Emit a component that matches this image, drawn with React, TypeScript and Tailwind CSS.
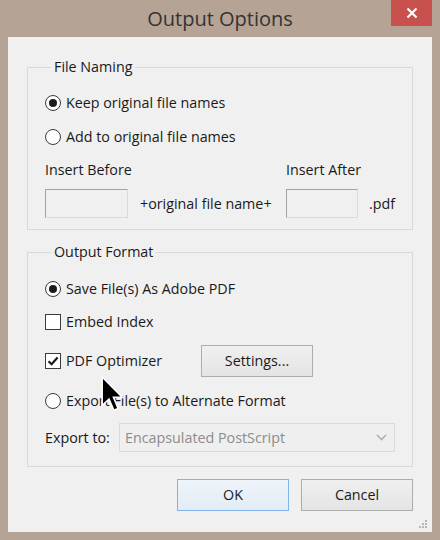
import React from "react";

const font = { fontFamily: '"Open Sans", "Noto Sans", Arial, sans-serif' };

function Radio({ checked, label }: { checked?: boolean; label: string }) {
  return (
    <div className="flex items-center h-[20px] gap-[5px]">
      <span className="w-[16px] h-[16px] rounded-full border border-[#3b3b3b] bg-white flex items-center justify-center">
        {checked && <span className="w-[8px] h-[8px] rounded-full bg-[#1c1c1c]" />}
      </span>
      <span className="text-[14.3px] text-[#1a1a1a] whitespace-nowrap">{label}</span>
    </div>
  );
}

function Checkbox({ checked, label }: { checked?: boolean; label: string }) {
  return (
    <div className="flex items-center h-[20px] gap-[5px]">
      <span className="w-[16px] h-[16px] border border-[#3b3b3b] bg-white flex items-center justify-center">
        {checked && (
          <svg width="12" height="12" viewBox="0 0 12 12">
            <path d="M1.5 6.2 L4.6 9.2 L10.6 2.4" fill="none" stroke="#1a1a1a" strokeWidth="2.2" />
          </svg>
        )}
      </span>
      <span className="text-[14.3px] text-[#1a1a1a] whitespace-nowrap">{label}</span>
    </div>
  );
}

function TextBox({ w }: { w: string }) {
  return (
    <div
      className={`${w} h-[29px] bg-[#f0f0f0] border border-t-[#a3a3a3] border-l-[#a3a3a3] border-r-[#dadada] border-b-[#dadada]`}
    />
  );
}

function Group({ title, children }: { title: string; children: React.ReactNode }) {
  return (
    <fieldset className="border border-[#d9d9d9] px-[17px]">
      <legend className="ml-[6px] px-[3px] text-[14.3px] leading-[20px] text-[#1a1a1a]">{title}</legend>
      {children}
    </fieldset>
  );
}

function Button({ label, primary }: { label: string; primary?: boolean }) {
  return (
    <button
      className={`w-[112px] h-[32px] text-[14.3px] text-[#1a1a1a] border bg-gradient-to-b ${
        primary
          ? "border-[#7eb4ea] from-[#eef4fa] to-[#e3ecf5]"
          : "border-[#adadad] from-[#f0f0f0] to-[#e4e4e4]"
      }`}
    >
      {label}
    </button>
  );
}

export default function App() {
  return (
    <div className="relative w-[440px] h-[540px] bg-[#b5a495] flex flex-col" style={font}>
      {/* Title bar */}
      <div className="h-[37px] flex items-start">
        <div className="w-[49px]" />
        <div className="flex-1 h-[37px] flex items-center justify-center text-[20px] text-[#333333]">
          Output Options
        </div>
        <div className="w-[41px] h-[26px] bg-[#c9514d] flex items-center justify-center">
          <svg width="12" height="12" viewBox="0 0 12 12">
            <path d="M1.5 1.5 L10.5 10.5 M10.5 1.5 L1.5 10.5" stroke="#ffffff" strokeWidth="2.2" />
          </svg>
        </div>
        <div className="w-[8px]" />
      </div>

      {/* Client area */}
      <div className="mx-[8px] mb-[8px] flex-1 bg-[#f0f0f0] px-[19px] pt-[20px] flex flex-col relative">
        <Group title="File Naming">
          <div className="flex flex-col">
            <div className="mt-[16px]">
              <Radio checked label="Keep original file names" />
            </div>
            <div className="mt-[14px]">
              <Radio label="Add to original file names" />
            </div>
            <div className="mt-[13px] grid grid-cols-[83px_158px_72px_auto] text-[14.3px] text-[#1a1a1a]">
              <span className="h-[20px] leading-[20px] whitespace-nowrap">Insert Before</span>
              <span />
              <span className="h-[20px] leading-[20px] whitespace-nowrap">Insert After</span>
              <span />
              <div className="mt-[9px]">
                <TextBox w="w-[83px]" />
              </div>
              <span className="mt-[9px] pl-[12px] flex items-center whitespace-nowrap">+original file name+</span>
              <div className="mt-[9px]">
                <TextBox w="w-[72px]" />
              </div>
              <span className="mt-[9px] pl-[11px] flex items-center">.pdf</span>
            </div>
            <div className="h-[11px]" />
          </div>
        </Group>

        <div className="h-[12px]" />

        <Group title="Output Format">
          <div className="flex flex-col">
            <div className="mt-[17px]">
              <Radio checked label="Save File(s) As Adobe PDF" />
            </div>
            <div className="mt-[13px]">
              <Checkbox label="Embed Index" />
            </div>
            <div className="mt-[13px] flex items-center h-[32px]">
              <div className="w-[156px]">
                <Checkbox checked label="PDF Optimizer" />
              </div>
              <Button label="Settings..." />
            </div>
            <div className="mt-[14px]">
              <Radio label="Export File(s) to Alternate Format" />
            </div>
            <div className="mt-[12px] flex items-center h-[29px]">
              <span className="w-[74px] text-[14.3px] text-[#1a1a1a] whitespace-nowrap">Export to:</span>
              <div className="w-[276px] h-[29px] border border-[#dadada] bg-[#efefef] flex items-center pl-[5px] pr-[7px]">
                <span className="flex-1 text-[14.3px] text-[#8c8c8c] whitespace-nowrap">Encapsulated PostScript</span>
                <svg width="11" height="7" viewBox="0 0 11 7">
                  <path d="M1 1 L5.5 5.5 L10 1" fill="none" stroke="#b0b0b0" strokeWidth="1.6" />
                </svg>
              </div>
            </div>
            <div className="h-[14px]" />
          </div>
        </Group>

        <div className="mt-[12px] flex justify-end gap-[12px]">
          <Button primary label="OK" />
          <Button label="Cancel" />
        </div>

        {/* resize grip */}
        <svg className="absolute right-[4px] bottom-[3px]" width="9" height="9" viewBox="0 0 9 9">
          <rect x="6" y="0" width="2" height="2" fill="#b8b8b8" />
          <rect x="3" y="3" width="2" height="2" fill="#b8b8b8" />
          <rect x="6" y="3" width="2" height="2" fill="#b8b8b8" />
          <rect x="0" y="6" width="2" height="2" fill="#b8b8b8" />
          <rect x="3" y="6" width="2" height="2" fill="#b8b8b8" />
          <rect x="6" y="6" width="2" height="2" fill="#b8b8b8" />
        </svg>
      </div>

      {/* mouse pointer */}
      <svg className="absolute left-[101px] top-[376px]" width="23" height="36" viewBox="0 0 12.5 20">
        <path
          d="M0.5 0.5 L0.5 16.5 L4.3 12.8 L7 19 L9.4 18 L6.8 11.9 L11.8 11.9 Z"
          fill="#000000"
          stroke="#ffffff"
          strokeWidth="0.9"
          strokeLinejoin="miter"
        />
      </svg>
    </div>
  );
}
